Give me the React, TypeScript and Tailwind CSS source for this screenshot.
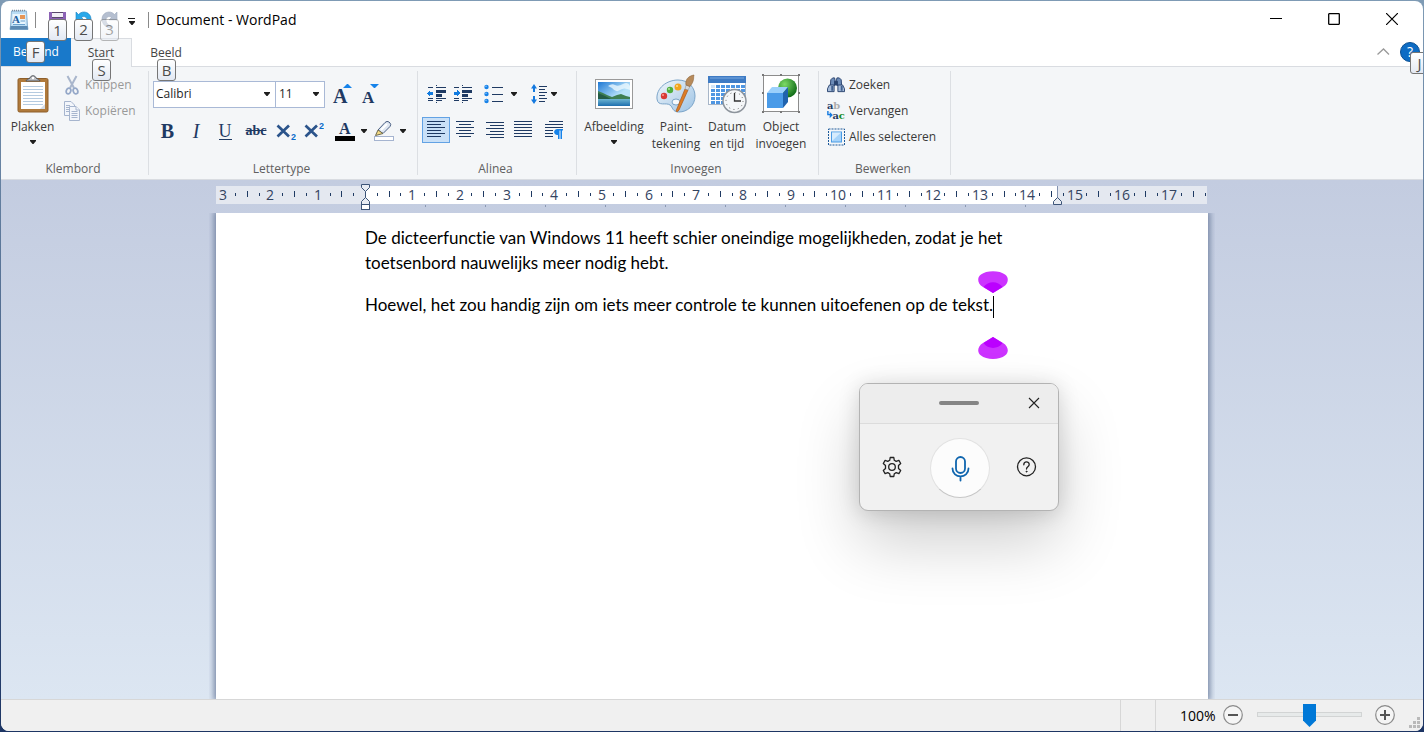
import React, { useState } from 'react';
import type { ReactNode } from 'react';

const INK = '#1f3a63';

/* --- SMALL SHARED PIECES --- */

const Caret = ({ className = '' }: { className?: string }) => (
  <svg viewBox="0 0 6 4" className={`h-1 w-1.5 shrink-0 ${className}`} fill="#1e1e1e">
    <path d="M0 0H6V1L3.5 4H2.5L0 1Z" />
  </svg>
);

const KeyTip = ({ children, className = '' }: { children: ReactNode; className?: string }) => (
  <span
    className={`pointer-events-none absolute z-20 flex h-[22px] w-[19px] items-center justify-center rounded-[3px] border border-[#767676] bg-gradient-to-b from-white to-[#e3e9f3] text-[15px] leading-none text-[#4c4c4c] ${className}`}
  >
    {children}
  </span>
);

const Group = ({ label, className = '', children }: { label: string; className?: string; children: ReactNode }) => (
  <section
    aria-label={label}
    className={`relative flex shrink-0 flex-col after:absolute after:top-1 after:right-0 after:bottom-1 after:w-px after:bg-[#dcdfe3] ${className}`}
  >
    <div className="flex-1">{children}</div>
    <div className="pr-1 pb-px text-center text-[12px] leading-[18px] text-[#606060]">{label}</div>
  </section>
);

const IconButton = ({
  label,
  className = '',
  children,
}: {
  label: string;
  className?: string;
  children: ReactNode;
}) => (
  <button type="button" aria-label={label} className={`flex h-[26px] items-center justify-center ${className}`}>
    {children}
  </button>
);

const LargeButton = ({ icon, lines, className = '' }: { icon: ReactNode; lines: ReactNode; className?: string }) => (
  <button type="button" className={`flex flex-col items-center text-[12px] leading-[17px] text-[#3a3a3a] ${className}`}>
    <span className="mb-[3px] flex h-[42px] items-center justify-center">{icon}</span>
    {lines}
  </button>
);

const RowButton = ({ icon, children, className = '' }: { icon: ReactNode; children: ReactNode; className?: string }) => (
  <button type="button" className={`flex h-[26px] items-center gap-1 text-[12px] whitespace-nowrap ${className}`}>
    <span className="flex w-[18px] shrink-0 justify-center">{icon}</span>
    {children}
  </button>
);

/* --- ICONS --- */

const AppIcon = () => (
  <svg width="20" height="22" viewBox="0 0 20 22">
    <path d="M2.500 2H17.500L18.500 17L19 20.500H1L1.500 17Z" fill="#b9dcf4" stroke="#8fb4d2" />
    <path d="M1.500 17H18.500L19 20.500H1Z" fill="#5b89b2" />
    <path d="M3 1.500H17" stroke="#7d8b9c" strokeDasharray="1 1" strokeWidth="1.500" />
    <rect x="3.500" y="5" width="13" height="11" fill="#e9f5fd" />
    <text x="3" y="14" fontFamily="Liberation Serif, serif" fontSize="11" fontWeight="bold" fill="#1f5f9f">A</text>
    <rect x="11" y="6" width="5" height="4" fill="#e69657" />
    <path d="M11.500 12H16M4 15.500H16" stroke="#6da3cf" />
  </svg>
);

const SaveIcon = () => (
  <svg width="17" height="17" viewBox="0 0 17 17">
    <path d="M0 1H17V17H2L0 15Z" fill="#8c62b5" />
    <rect x="3" y="1" width="11" height="6" fill="#f2eff6" />
    <path d="M3 1.500H14M3 6.500H14" stroke="#58486b" />
    <rect x="4" y="10" width="9" height="7" fill="#d7cce6" />
  </svg>
);

const UndoIcon = ({ redo = false }: { redo?: boolean }) => (
  <svg width="17" height="18" viewBox="0 0 17 18" className={redo ? '-scale-x-100' : ''}>
    <path
      d="M1 1V9H9L6.500 6.500C9 4.500 12 6 12 9C12 12 10 14 7 15V17C12 16.500 16 13.500 16 8C16 1.500 8 -1.500 3.500 3.500Z"
      fill={redo ? '#b5bfd0' : '#28a8ea'}
      stroke={redo ? '#9fabc0' : '#1582c5'}
      strokeWidth=".6"
    />
  </svg>
);

const ClipboardIcon = () => (
  <svg width="32" height="38" viewBox="0 0 32 38">
    <rect x="1" y="3.500" width="30" height="33.500" rx="1.500" fill="#b07a3b" stroke="#8e5f2a" />
    <rect x="4" y="7" width="24" height="27" fill="#fff" />
    <path d="M6 11.500H26M6 14.500H26M6 17.500H26M6 20.500H26M6 23.500H26M6 26.500H26M6 29.500H26" stroke="#b5cbe0" />
    <path d="M28 29V34H23Z" fill="#d5dce5" />
    <path d="M9 6C9 4.500 12 4 13 3C13.500 0 18.500 0 19 3C20 4 23 4.500 23 6Z" fill="#b9bcc1" stroke="#55585d" />
    <circle cx="16" cy="3" r="1.200" fill="#fff" />
  </svg>
);

const ScissorsIcon = () => (
  <svg width="14" height="20" viewBox="0 0 14 20" fill="none">
    <path d="M2.500 1L9 13M11.500 1L5 13" stroke="#a9b6cc" strokeWidth="2" />
    <ellipse cx="3.500" cy="16" rx="2.200" ry="2.900" stroke="#95a8c8" strokeWidth="1.800" transform="rotate(20 3.500 16)" />
    <ellipse cx="10.500" cy="16" rx="2.200" ry="2.900" stroke="#95a8c8" strokeWidth="1.800" transform="rotate(-20 10.500 16)" />
  </svg>
);

const CopyIcon = () => (
  <svg width="16" height="20" viewBox="0 0 16 20" fill="#f3f6fb" stroke="#a6b5ce">
    <path d="M.5 .5H7L10.500 4V14.500H.5Z" />
    <path d="M2 4.500H6M2 6.500H8M2 8.500H8M2 10.500H8" />
    <path d="M5.500 5.500H12L15.500 9V19.500H5.500Z" />
    <path d="M12 5.500V9H15.500M7.500 10.500H13.500M7.500 12.500H13.500M7.500 14.500H13.500M7.500 16.500H13.500" />
  </svg>
);

const FontSizeIcon = ({ grow = false }: { grow?: boolean }) => (
  <svg width="22" height="22" viewBox="0 0 22 22">
    <text x={grow ? 1 : 3} y="19" fontFamily="Liberation Serif, serif" fontWeight="bold" fontSize={grow ? 20 : 17} fill={INK}>
      A
    </text>
    <path d={grow ? 'M11 4L15 0H16L20 4Z' : 'M11 0H20L16 4H15Z'} fill="#1683ea" />
  </svg>
);

const ScriptIcon = ({ sup = false }: { sup?: boolean }) => (
  <svg width="20" height="20" viewBox="0 0 20 20">
    <path d="M1.500 4.500L13 15.500M13 4.500L1.500 15.500" fill="none" stroke="#2b548b" strokeWidth="2.700" />
    <text x="15" y={sup ? 8 : 19} fontFamily="Liberation Sans, sans-serif" fontWeight="bold" fontSize="9" fill="#0a6ccb">
      2
    </text>
  </svg>
);

const FontColorIcon = () => (
  <svg width="20" height="22" viewBox="0 0 20 22" className="overflow-visible">
    <text x="4" y="14" fontFamily="Liberation Serif, serif" fontWeight="bold" fontSize="16" fill={INK}>A</text>
    <rect y="16" width="20" height="5" fill="#000" />
  </svg>
);

const HighlightIcon = () => (
  <svg width="20" height="22" viewBox="0 0 20 22">
    <rect x=".5" y="16.500" width="19" height="4" fill="#fff" stroke="#a5b4d0" />
    <path d="M4 10L11 2.500Q13 .5 15 2L16 3Q17.500 4.500 16 6.500L9 13.500Z" fill="#dfe7f2" stroke="#4a5f82" />
    <path d="M7 10L13 4" stroke="#fff" strokeWidth="2" />
    <path d="M4 10L1.500 15.500L9 13.500Z" fill="#f3d981" stroke="#6e6a50" />
  </svg>
);

const IndentIcon = ({ increase = false }: { increase?: boolean }) => (
  <svg width="19" height="20" viewBox="0 0 19 20" shapeRendering="crispEdges">
    <g fill={INK}>
      <path d="M9 1H10V2H9ZM9 18H10V19H9ZM1 3H6V4H1ZM1 14H6V15H1ZM1 16H6V17H1Z" />
      <path d="M9 3H19V4H9ZM9 6H19V9H9ZM9 10H15V13H9ZM9 14H19V15H9ZM9 16H15V17H9Z" />
    </g>
    <path d={increase ? 'M7 9L4 6V8H1V11H4V13Z' : 'M0 9L3 6V8H6V11H3V13Z'} fill="#117be0" />
  </svg>
);

const BulletsIcon = () => (
  <svg width="19" height="20" viewBox="0 0 19 20">
    {[3, 10, 17].map((y) => (
      <g key={y}>
        <circle cx="2.500" cy={y} r="2.200" fill="#1782e8" />
        <circle cx="2" cy={y - 0.7} r=".8" fill="#8ac6fb" />
        <path d={`M8 ${y + 0.5}H19`} stroke={INK} />
      </g>
    ))}
  </svg>
);

const LineSpacingIcon = () => (
  <svg width="16" height="20" viewBox="0 0 16 20">
    <path d="M3 0L6 4.500H4V8H2V4.500H0ZM3 20L6 15.500H4V12H2V15.500H0Z" fill="#1479df" />
    <path d="M8 2.500H16M8 5.500H14M8 8.500H16M8 11.500H14M8 14.500H16M8 17.500H14" stroke={INK} />
  </svg>
);

const ALIGN_PATHS = {
  left: 'M0 1.500H18M0 4.500H14M0 7.500H18M0 10.500H14M0 13.500H18M0 16.500H14',
  center: 'M0 1.500H18M3 4.500H15M0 7.500H18M3 10.500H15M0 13.500H18M3 16.500H15',
  right: 'M0 2.500H18M4 5.500H18M0 8.500H18M4 11.500H18M0 14.500H18M4 17.500H18',
  justify: 'M0 1.500H18M0 4.500H18M0 7.500H18M0 10.500H18M0 13.500H18M0 16.500H18',
  paragraph: 'M4 1.500H18M0 4.500H18M0 7.500H18M0 10.500H8M0 13.500H8M0 16.500H8',
};

const AlignIcon = ({ kind }: { kind: keyof typeof ALIGN_PATHS }) => (
  <svg width="18" height="20" viewBox="0 0 18 20">
    <path d={ALIGN_PATHS[kind]} stroke={INK} />
    {kind === 'paragraph' && (
      <path d="M18 9H12.500C8 9 8 15 12.500 15H13V19H14.500V10.500H15.500V19H17V10.500H18Z" fill="#1683ea" />
    )}
  </svg>
);

const PictureIcon = () => (
  <svg width="38" height="30" viewBox="0 0 38 30">
    <defs>
      <linearGradient id="sky" x1="0" y1="0" x2="1" y2="1">
        <stop offset="0" stopColor="#1e78d4" />
        <stop offset=".6" stopColor="#b8e3fa" />
      </linearGradient>
      <linearGradient id="sea" x1="0" y1="0" x2="0" y2="1">
        <stop offset="0" stopColor="#79bfd6" />
        <stop offset="1" stopColor="#1f6fae" />
      </linearGradient>
    </defs>
    <rect x=".5" y=".5" width="37" height="29" fill="#fff" stroke="#9a9a9a" />
    <rect x="3" y="3" width="32" height="24" fill="url(#sky)" />
    <path d="M13 7Q17 4 20 6T28 5T35 7V11Q29 8 25 11T17 9Z" fill="#eaf7fe" opacity=".8" />
    <rect x="3" y="19" width="32" height="8" fill="url(#sea)" />
    <path d="M3 12L8 14L12 16L17 18L22 16L26 15L31 17L35 18V20H3Z" fill="#3e7f52" />
    <path d="M3 14L10 17L16 20H3Z" fill="#235b45" />
  </svg>
);

const PaintIcon = () => (
  <svg width="40" height="40" viewBox="0 0 40 40">
    <defs>
      <linearGradient id="palette" x1="0" y1="0" x2="1" y2="1">
        <stop offset="0" stopColor="#f0f6fb" />
        <stop offset="1" stopColor="#9dc3e4" />
      </linearGradient>
    </defs>
    <path
      d="M1 25C0 14 11 6 22 6C33 6 39 14 39 22C39 32 31 38 23 38C16 38 17 33 14 31C10 28 2 33 1 25Z"
      fill="url(#palette)"
      stroke="#7ba4c8"
    />
    <ellipse cx="20" cy="28" rx="4" ry="3" fill="#f6f9fc" stroke="#7ba4c8" />
    <circle cx="8" cy="22" r="3.200" fill="#d93a35" />
    <circle cx="14" cy="16" r="3.200" fill="#4fae3e" />
    <circle cx="22" cy="13" r="3.500" fill="#f2a41e" />
    <path d="M20 37L29 15L32 16L23 36Q21 39 20 37Z" fill="#dd7d27" stroke="#a9571a" strokeWidth=".7" />
    <path d="M29 15L30 11L34 12.500L32 16Z" fill="#d6d9dc" stroke="#888" strokeWidth=".5" />
    <path d="M30 11C29 6 32 2 38 1C37 4 39 6 34 12.500Z" fill="#b78a5a" stroke="#8b6339" strokeWidth=".6" />
    <circle cx="7" cy="21" r="1" fill="#ff9a90" />
    <circle cx="13" cy="15" r="1" fill="#b4e69e" />
    <circle cx="21" cy="12" r="1" fill="#ffe08d" />
  </svg>
);

const DateIcon = () => (
  <svg width="40" height="40" viewBox="0 0 40 40">
    <rect x="1.500" y="2.500" width="37" height="28" fill="#fff" stroke="#a7b6c8" />
    <rect x="1" y="2" width="38" height="7" fill="#3e7bc4" />
    <path d="M3 4H37" stroke="#79a9e0" />
    {[11, 15, 19, 23, 27].map((y) =>
      [4, 9, 14, 19, 24, 29, 34].map((x) => (
        <rect key={`${x}-${y}`} x={x} y={y} width="4" height="3" fill={y < 12 && x < 9 ? '#d4e6f8' : '#4f96e2'} />
      )),
    )}
    <circle cx="27.500" cy="27" r="11.500" fill="#f5f7f9" stroke="#8d949c" strokeWidth="1.500" />
    <circle cx="27.500" cy="27" r="8.500" fill="none" stroke="#666" strokeDasharray="1 3.450" />
    <path d="M27.500 19V27H34" fill="none" stroke="#333" strokeWidth="1.300" />
  </svg>
);

const ObjectIcon = () => (
  <svg width="38" height="40" viewBox="0 0 38 40">
    <defs>
      <radialGradient id="ball" cx=".35" cy=".3" r=".7">
        <stop offset="0" stopColor="#7ddb66" />
        <stop offset="1" stopColor="#15701b" />
      </radialGradient>
    </defs>
    <rect x="1.500" y="1.500" width="35" height="36" fill="#fff" stroke="#8c8c8c" />
    <path
      d="M0 0H2V2H0ZM18 0H20V2H18ZM36 0H38V2H36ZM0 18H2V20H0ZM36 18H38V20H36ZM0 37H2V39H0ZM18 37H20V39H18ZM36 37H38V39H36Z"
      fill="#777"
    />
    <circle cx="25.500" cy="14" r="9.500" fill="url(#ball)" />
    <path d="M5 19L10 13H26L21 19Z" fill="#9bd0fb" />
    <rect x="5" y="19" width="16" height="15" fill="#4a9be8" />
    <path d="M21 19L26 13V28L21 34Z" fill="#2063ae" />
  </svg>
);

const BinocularsIcon = () => (
  <svg width="19" height="16" viewBox="0 0 19 16" fill="#6d8cb8" stroke="#29436e">
    <path d="M4 2.500L6 .5H8L8.500 3V8L7 9H3.500Z" />
    <path d="M10 3L10.500 .5H13L15 2.500L15.500 9H12L10 8Z" />
    <path d="M8 4H11V8H8Z" fill="#29436e" />
    <path d="M2.500 8H7.500V15H.5V12Z" fill="#a5bbd9" />
    <path d="M11.500 8H16.500L18.500 12V15H11.500Z" fill="#a5bbd9" />
    <path d="M5.500 9V14M15.500 9V14" stroke="#40608f" strokeWidth="2" />
  </svg>
);

const ReplaceIcon = () => (
  <svg width="20" height="22" viewBox="0 0 20 22" fontFamily="DejaVu Serif, serif" fontWeight="bold" fontSize="11">
    <text x="0" y="9" fill={INK}>a</text>
    <text x="7" y="9" fill="#adadad">b</text>
    <text x="6" y="20" fill={INK}>a</text>
    <text x="13" y="20" fill="#118a1f">c</text>
    <path d="M1 11V15H4" fill="none" stroke="#1479df" strokeWidth="1.600" />
    <path d="M3 12L6.500 15.500L3 19Z" fill="#1479df" />
  </svg>
);

const SelectAllIcon = () => (
  <svg width="17" height="18" viewBox="0 0 17 18">
    <rect x=".5" y="1" width="16" height="16" fill="none" stroke="#1e5b9b" strokeDasharray="2 1" />
    <rect x="3.500" y="4" width="10" height="10" fill="#a5d3fa" stroke="#4b9be4" />
    <path d="M4 4.500H13L4 13Z" fill="#d6ecfd" />
  </svg>
);

/* --- RULER --- */

const CM = 47.3;
const ORIGIN = 149;

const Ruler = () => {
  const ticks: ReactNode[] = [];
  for (let q = -12; q <= 71; q++) {
    const x = Math.round(ORIGIN + (q / 4) * CM);
    if (q === 0) continue;
    if (q % 4 === 0) {
      ticks.push(
        <text key={q} x={x} y="14" textAnchor="middle" fontSize="14" fill="#33435f">
          {Math.abs(q / 4)}
        </text>,
      );
    } else {
      const half = q % 2 === 0;
      ticks.push(<rect key={q} x={x} y={half ? 5 : 7} width="1" height={half ? 6 : 3} fill={INK} />);
    }
  }
  return (
    <svg
      width="992"
      height="27"
      viewBox="0 0 992 27"
      className="mx-auto block overflow-visible"
      role="img"
      aria-label="Liniaal"
    >
      <rect width="991" height="18" fill="#e4e8f0" />
      <rect x={ORIGIN} width="692" height="18" fill="#fff" />
      {ticks}
      {Array.from({ length: 11 }, (_, i) => (
        <rect key={i} x={209 + i * 60} y="19" width="1" height="2" fill="#8b99b3" />
      ))}
      <g fill="#e8ecf3" stroke="#3c5478">
        <path d="M145.500 -1.500H153.500V1.500L149.500 5.500L145.500 1.500Z" />
        <path d="M149.500 5.500V12" />
        <path d="M149.500 11.500L153.500 15.500V18.500H145.500V15.500Z" />
        <rect x="145.500" y="18.500" width="8" height="5" fill="#fff" />
        <path d="M841.500 0V12" stroke="#8292b0" />
        <path d="M841.500 11.500L845.500 15.500V18.500H837.500V15.500Z" />
      </g>
    </svg>
  );
};

/* --- RIBBON --- */

const Ribbon = () => (
  <div className="flex h-[114px] shrink-0 border-y border-[#d9dce1] bg-[#f4f6f8]">
    <Group label="Klembord" className="w-[148px]">
      <div className="flex">
        <LargeButton
          className="w-[62px] pt-1.5 pl-px"
          icon={<ClipboardIcon />}
          lines={
            <>
              Plakken
              <Caret className="mt-[5px]" />
            </>
          }
        />
        <div className="pt-[5px] text-[#999]">
          <RowButton icon={<ScissorsIcon />}>Knippen</RowButton>
          <RowButton icon={<CopyIcon />}>Kopiëren</RowButton>
        </div>
      </div>
    </Group>

    <Group label="Lettertype" className="w-[269px]">
      <div className="flex items-center pt-3.5 pl-1">
        <div className="relative">
          <select
            aria-label="Lettertypefamilie"
            className="block h-[27px] w-[123px] appearance-none border border-[#a9b9d6] bg-white pb-0.5 pl-0.5 text-[12px] text-[#1e1e1e]"
          >
            <option>Calibri</option>
          </select>
          <Caret className="pointer-events-none absolute top-[11px] right-1.5" />
        </div>
        <div className="relative -ml-px">
          <select
            aria-label="Tekengrootte"
            className="block h-[27px] w-[50px] appearance-none border border-[#a9b9d6] bg-white pb-0.5 pl-[3px] text-[12px] text-[#1e1e1e]"
          >
            <option>11</option>
          </select>
          <Caret className="pointer-events-none absolute top-[11px] right-1.5" />
        </div>
        <IconButton label="Lettertype vergroten" className="ml-1 w-[27px]">
          <FontSizeIcon grow />
        </IconButton>
        <IconButton label="Lettertype verkleinen" className="w-[27px]">
          <FontSizeIcon />
        </IconButton>
      </div>
      <div className="flex items-center pt-2.5 pl-1 font-['Liberation_Serif',serif] text-[20px] leading-none text-[#1f3a63]">
        <IconButton label="Vet" className="w-[29px] font-bold">B</IconButton>
        <IconButton label="Cursief" className="w-[28px] italic">I</IconButton>
        <IconButton label="Onderstrepen" className="w-[30px]">
          <span className="border-b border-[#1f3a63] text-[18px] leading-4">U</span>
        </IconButton>
        <IconButton label="Doorhalen" className="w-[32px] text-[14px] font-bold line-through">abc</IconButton>
        <IconButton label="Subscript" className="w-[28px]">
          <ScriptIcon />
        </IconButton>
        <IconButton label="Superscript" className="w-[28px]">
          <ScriptIcon sup />
        </IconButton>
        <IconButton label="Tekstkleur" className="ml-1.5 w-[33px] gap-1.5">
          <FontColorIcon />
          <Caret />
        </IconButton>
        <IconButton label="Markeringskleur" className="ml-1.5 w-[33px] gap-1.5">
          <HighlightIcon />
          <Caret />
        </IconButton>
      </div>
    </Group>

    <Group label="Alinea" className="w-[159px]">
      <div className="flex items-center pt-3.5 pl-1">
        <IconButton label="Inspringing verkleinen" className="w-[28px]">
          <IndentIcon />
        </IconButton>
        <IconButton label="Inspringing vergroten" className="w-[25px]">
          <IndentIcon increase />
        </IconButton>
        <IconButton label="Opsommingstekens" className="ml-1.5 w-[38px] gap-2">
          <BulletsIcon />
          <Caret />
        </IconButton>
        <IconButton label="Regelafstand" className="ml-2 w-[34px] gap-1">
          <LineSpacingIcon />
          <Caret />
        </IconButton>
      </div>
      <div className="flex items-center pt-2.5 pl-1">
        <IconButton label="Links uitlijnen" className="w-[28px] border border-[#62a2e4] bg-[#c9e0f7]">
          <AlignIcon kind="left" />
        </IconButton>
        <IconButton label="Centreren" className="w-[30px]">
          <AlignIcon kind="center" />
        </IconButton>
        <IconButton label="Rechts uitlijnen" className="w-[29px]">
          <AlignIcon kind="right" />
        </IconButton>
        <IconButton label="Uitvullen" className="w-[28px]">
          <AlignIcon kind="justify" />
        </IconButton>
        <IconButton label="Alinea" className="w-[34px]">
          <AlignIcon kind="paragraph" />
        </IconButton>
      </div>
    </Group>

    <Group label="Invoegen" className="w-[242px]">
      <div className="flex pt-1.5">
        <LargeButton
          className="w-[74px]"
          icon={<PictureIcon />}
          lines={
            <>
              Afbeelding
              <Caret className="mt-[5px]" />
            </>
          }
        />
        <LargeButton className="w-[50px]" icon={<PaintIcon />} lines={<>Paint-<br />tekening</>} />
        <LargeButton className="w-[52px]" icon={<DateIcon />} lines={<>Datum<br />en tijd</>} />
        <LargeButton className="w-[56px]" icon={<ObjectIcon />} lines={<>Object<br />invoegen</>} />
      </div>
    </Group>

    <Group label="Bewerken" className="w-[132px]">
      <div className="pt-[5px] pl-2 text-[#3a3a3a]">
        <RowButton icon={<BinocularsIcon />}>Zoeken</RowButton>
        <RowButton icon={<ReplaceIcon />}>Vervangen</RowButton>
        <RowButton icon={<SelectAllIcon />}>Alles selecteren</RowButton>
      </div>
    </Group>
  </div>
);

/* --- DICTATION PANEL --- */

const DictationPanel = () => (
  <div className="absolute top-[203px] left-[858px] w-[200px] rounded-[9px] border border-[#b3b3b3] bg-[#f1f1f1] shadow-[0_32px_64px_rgba(0,0,0,0.19),0_2px_21px_rgba(0,0,0,0.15)]">
    <div className="grid h-10 grid-cols-3 items-center rounded-t-[8px] border-b border-[#dcdcdc] bg-[#ededed] pb-px">
      <span className="col-start-2 h-1 w-10 justify-self-center rounded-full bg-[#858585]" />
      <button type="button" aria-label="Sluiten" className="mr-[18px] justify-self-end">
        <svg width="12" height="12" viewBox="0 0 12 12" stroke="#222" strokeWidth="1.100">
          <path d="M1 1L11 11M11 1L1 11" />
        </svg>
      </button>
    </div>
    <div className="flex h-[86px] items-center justify-between px-[21px] pt-0.5">
      <button type="button" aria-label="Instellingen" className="pb-0.5">
        <svg width="22" height="22" viewBox="0 0 22 22" fill="none" stroke="#222" strokeWidth="1.300" strokeLinejoin="round">
          <path d="M9.200 1.500H12.800L13.300 4.300L15.200 5.400L17.900 4.400L19.700 7.500L17.500 9.500V12.500L19.700 14.500L17.900 17.600L15.200 16.600L13.300 17.700L12.800 20.500H9.200L8.700 17.700L6.800 16.600L4.100 17.600L2.300 14.500L4.500 12.500V9.500L2.300 7.500L4.100 4.400L6.800 5.400L8.700 4.300Z" />
          <circle cx="11" cy="11" r="3.300" />
        </svg>
      </button>
      <button
        type="button"
        aria-label="Microfoon"
        className="flex size-[60px] items-center justify-center rounded-full border border-[#e2e2e2] border-b-[#c6c6c6] bg-[#fcfcfc]"
      >
        <svg width="20" height="28" viewBox="0 0 20 28" fill="none" stroke="#0f65ae" strokeWidth="1.800" strokeLinecap="round">
          <rect x="6" y="3" width="9" height="16" rx="4.500" />
          <path d="M2.500 14.500C2.500 25 18.500 25 18.500 14.500M10.500 22.500V26.500" />
        </svg>
      </button>
      <button type="button" aria-label="Help" className="pb-0.5">
        <svg width="21" height="20" viewBox="0 0 21 20" fill="none" stroke="#222" strokeWidth="1.300" strokeLinecap="round">
          <circle cx="10.500" cy="9.800" r="9" />
          <path d="M7.800 7.800C7.800 4 13.200 4 13.200 7.600C13.200 9.800 10.500 9.800 10.500 12" />
          <circle cx="10.500" cy="14.600" r=".6" fill="#222" strokeWidth=".6" />
        </svg>
      </button>
    </div>
  </div>
);

const HandleShape = ({ className }: { className: string }) => (
  <svg width="30" height="22" viewBox="0 0 30 22" className={`absolute max-w-none ${className}`}>
    <path d="M15 22L5 16C-1 12.500 -1 6 3 3.500C8 -1 22 -1 27 3.500C31 6 31 12.500 25 16Z" fill="#cc33ff" />
    <path d="M15 22L5.500 16C10 9.500 20 9.500 24.500 16Z" fill="#bb00ff" />
  </svg>
);

/* --- APP --- */

const App = () => {
  const [zoom, setZoom] = useState(100);

  return (
    <div className="flex h-screen flex-col overflow-hidden bg-gradient-to-b from-[#7f9bb5] to-[#1d3564] p-px font-['Open_Sans','Noto_Sans',sans-serif]">
      <div className="flex min-h-0 flex-1 flex-col overflow-hidden rounded-lg bg-white">
        {/* Title bar */}
        <header className="flex h-[37px] shrink-0 items-center pl-2">
          <AppIcon />
          <span className="ml-1.5 h-4 w-px bg-[#8a8a8a]" />
          <div className="ml-[13px] flex items-center gap-[9px]">
            <button type="button" aria-label="Opslaan" className="relative">
              <SaveIcon />
              <KeyTip className="top-2 -left-px">1</KeyTip>
            </button>
            <button type="button" aria-label="Ongedaan maken" className="relative">
              <UndoIcon />
              <KeyTip className="top-2 -left-px">2</KeyTip>
            </button>
            <button type="button" aria-label="Opnieuw" className="relative">
              <UndoIcon redo />
              <KeyTip className="top-2 -left-px opacity-50">3</KeyTip>
            </button>
          </div>
          <button type="button" aria-label="Werkbalk aanpassen" className="ml-2.5 flex flex-col items-center gap-0.5 pt-1">
            <span className="h-px w-[7px] bg-[#1e1e1e]" />
            <Caret />
          </button>
          <span className="ml-[13px] h-4 w-px bg-[#8a8a8a]" />
          <h1 className="ml-[7px] text-[14px] text-black">Document - WordPad</h1>
          <div className="ml-auto flex items-center gap-[46px] pr-[25px] pb-0.5">
            <button type="button" aria-label="Minimaliseren">
              <svg width="12" height="12" viewBox="0 0 12 12" stroke="#000"><path d="M0 5.500H12" /></svg>
            </button>
            <button type="button" aria-label="Maximaliseren">
              <svg width="12" height="12" viewBox="0 0 12 12" fill="none" stroke="#000" strokeWidth="1.300">
                <rect x=".7" y=".7" width="10.600" height="10.600" rx=".5" />
              </svg>
            </button>
            <button type="button" aria-label="Sluiten">
              <svg width="12" height="12" viewBox="0 0 12 12" stroke="#000" strokeWidth="1.200"><path d="M0 0L12 12M12 0L0 12" /></svg>
            </button>
          </div>
        </header>

        {/* Tabs */}
        <nav className="relative z-10 -mb-px flex h-[29px] shrink-0 text-[12px] text-[#444]">
          <button type="button" className="relative mb-px w-[70px] bg-[#1979ca] text-white">
            Bestand
            <KeyTip className="top-[3px] left-[25px]">F</KeyTip>
          </button>
          <button type="button" className="relative w-[61px] border-t border-r border-[#d9dce1] bg-[#f4f6f8]">
            Start
            <KeyTip className="top-5 left-[21px]">S</KeyTip>
          </button>
          <button type="button" className="relative w-[68px]">
            Beeld
            <KeyTip className="top-[21px] left-[25px]">B</KeyTip>
          </button>
          <div className="ml-auto flex items-center gap-2.5 pr-[3px] pb-px">
            <button type="button" aria-label="Lint minimaliseren">
              <svg width="14" height="8" viewBox="0 0 14 8" fill="none" stroke="#9a9a9a" strokeWidth="1.300">
                <path d="M1.500 6.500L7.500 1L13 6.500" />
              </svg>
            </button>
            <button
              type="button"
              aria-label="Help"
              className="relative size-5 rounded-full border border-[#0b4f92] bg-[#0d6cc4] text-[14px] leading-none text-white"
            >
              ?
              <KeyTip className="top-[9px] left-[9px]">J</KeyTip>
            </button>
          </div>
        </nav>

        <Ribbon />

        {/* Document area */}
        <main className="relative flex min-h-0 flex-1 flex-col overflow-hidden bg-gradient-to-b from-[#c3cce0] to-[#dce6f2] pt-1.5">
          <Ruler />
          <article className="mx-auto w-[992px] flex-1 bg-white pt-3 pr-[150px] pl-[149px] font-['Lato','Open_Sans',sans-serif] text-[17px] leading-[25px] text-black shadow-[0_0_6px_2px_#7585a3] [clip-path:inset(0_-7px)] [font-variant-ligatures:none]">
            <p className="whitespace-nowrap">
              De dicteerfunctie van Windows 11 heeft schier oneindige mogelijkheden, zodat je het
              <br />
              toetsenbord nauwelijks meer nodig hebt.
            </p>
            <p className="mt-[17px] whitespace-nowrap">
              Hoewel, het zou handig zijn om iets meer controle te kunnen uitoefenen op de tekst.
              <span className="relative inline-block h-[22px] w-px bg-black align-middle">
                <HandleShape className="-top-[25px] -left-[15px]" />
                <HandleShape className="top-[41px] -left-[15px] rotate-180" />
              </span>
            </p>
          </article>
          <DictationPanel />
        </main>

        {/* Status bar */}
        <footer className="relative flex h-8 shrink-0 items-center justify-end border-t border-[#d7d7d7] bg-[#f0f0f0] pr-7">
          <span className="h-full w-px bg-[#d7d7d7]" />
          <span className="ml-[34px] h-full w-px bg-[#d7d7d7]" />
          <label htmlFor="zoom" className="ml-6 w-[37px] text-[14px] text-black">
            {zoom}%
          </label>
          <button
            type="button"
            aria-label="Uitzoomen"
            className="ml-1.5 pb-0.5"
            onClick={() => setZoom(Math.max(10, zoom - 10))}
          >
            <svg width="20" height="20" viewBox="0 0 20 20">
              <circle cx="10" cy="10" r="9.300" fill="#f5f5f5" stroke="#8a8a8a" strokeWidth="1.200" />
              <path d="M5 10H15" stroke="#555" strokeWidth="2" />
            </svg>
          </button>
          <input
            id="zoom"
            type="range"
            min={0}
            max={200}
            value={zoom}
            onChange={(e) => setZoom(Number(e.target.value))}
            className="mr-[13px] mb-0.5 ml-3.5 h-6 w-[105px] appearance-none bg-transparent [&::-webkit-slider-runnable-track]:h-[5px] [&::-webkit-slider-runnable-track]:border [&::-webkit-slider-runnable-track]:border-[#d2d4d4] [&::-webkit-slider-runnable-track]:bg-[#e7eaea] [&::-webkit-slider-thumb]:-mt-[9px] [&::-webkit-slider-thumb]:h-[23px] [&::-webkit-slider-thumb]:w-[13px] [&::-webkit-slider-thumb]:appearance-none [&::-webkit-slider-thumb]:bg-[#0078d7] [&::-webkit-slider-thumb]:[clip-path:polygon(0_0,100%_0,100%_72%,50%_100%,0_72%)]"
          />
          <button
            type="button"
            aria-label="Inzoomen"
            className="pb-0.5"
            onClick={() => setZoom(Math.min(200, zoom + 10))}
          >
            <svg width="20" height="20" viewBox="0 0 20 20">
              <circle cx="10" cy="10" r="9.300" fill="#f5f5f5" stroke="#8a8a8a" strokeWidth="1.200" />
              <path d="M5 10H15M10 5V15" stroke="#555" strokeWidth="2" />
            </svg>
          </button>
          <svg width="12" height="12" viewBox="0 0 12 12" className="absolute right-0.5 bottom-0.5" fill="#b9b9b9">
            <path d="M8 0H11V3H8ZM4 4H7V7H4ZM8 4H11V7H8ZM0 8H3V11H0ZM4 8H7V11H4ZM8 8H11V11H8Z" />
          </svg>
        </footer>
      </div>
    </div>
  );
};

export default App;
